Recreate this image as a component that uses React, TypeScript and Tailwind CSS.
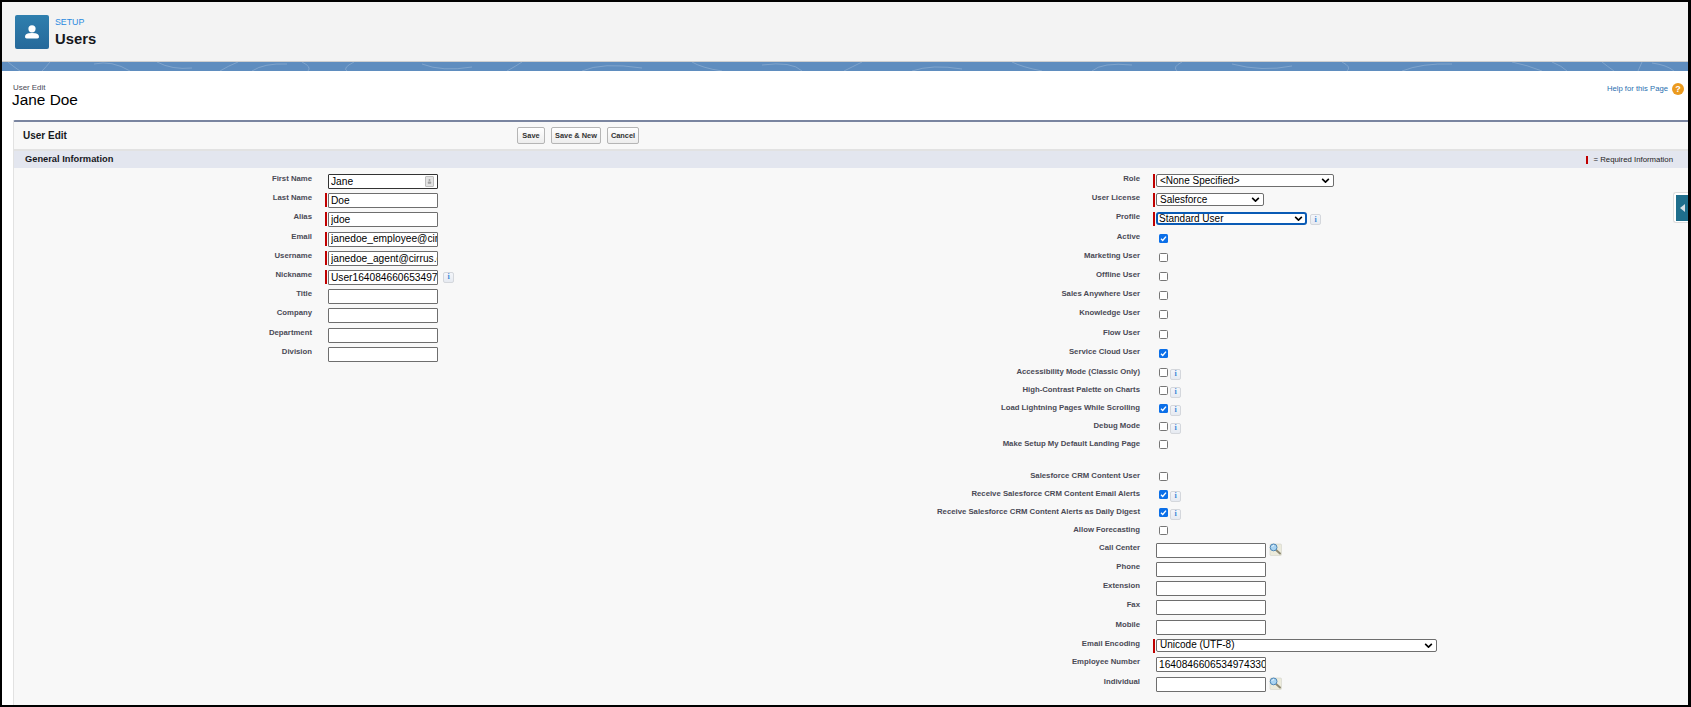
import React from "react";

type Control =
  | { kind: "text"; value?: string; required?: boolean; info?: boolean; lookup?: boolean; contact?: boolean; dark?: boolean }
  | { kind: "select"; value: string; width: string; focused?: boolean; info?: boolean }
  | { kind: "check"; checked?: boolean; info?: boolean };

type Row = { label: string; height?: string; control: Control };

const tall = "h-[19.2px]";
const short = "h-[18px]";

const leftRows: Row[] = [
  { label: "First Name", control: { kind: "text", value: "Jane", contact: true, dark: true } },
  { label: "Last Name", control: { kind: "text", value: "Doe", required: true } },
  { label: "Alias", control: { kind: "text", value: "jdoe", required: true } },
  { label: "Email", control: { kind: "text", value: "janedoe_employee@cirrus.com", required: true } },
  { label: "Username", control: { kind: "text", value: "janedoe_agent@cirrus.com", required: true } },
  { label: "Nickname", control: { kind: "text", value: "User16408466065349743", required: true, info: true } },
  { label: "Title", control: { kind: "text" } },
  { label: "Company", control: { kind: "text" } },
  { label: "Department", control: { kind: "text" } },
  { label: "Division", control: { kind: "text" } },
];

const rightTop: Row[] = [
  { label: "Role", control: { kind: "select", value: "<None Specified>", width: "w-[178px]" } },
  { label: "User License", control: { kind: "select", value: "Salesforce", width: "w-[108px]" } },
  { label: "Profile", control: { kind: "select", value: "Standard User", width: "w-[151px]", focused: true, info: true } },
  { label: "Active", control: { kind: "check", checked: true } },
  { label: "Marketing User", control: { kind: "check" } },
  { label: "Offline User", control: { kind: "check" } },
  { label: "Sales Anywhere User", control: { kind: "check" } },
  { label: "Knowledge User", control: { kind: "check" } },
  { label: "Flow User", control: { kind: "check" } },
  { label: "Service Cloud User", height: "h-[20.2px]", control: { kind: "check", checked: true } },
  { label: "Accessibility Mode (Classic Only)", height: short, control: { kind: "check", info: true } },
  { label: "High-Contrast Palette on Charts", height: short, control: { kind: "check", info: true } },
  { label: "Load Lightning Pages While Scrolling", height: short, control: { kind: "check", checked: true, info: true } },
  { label: "Debug Mode", height: short, control: { kind: "check", info: true } },
  { label: "Make Setup My Default Landing Page", height: short, control: { kind: "check" } },
];

const rightBottom: Row[] = [
  { label: "Salesforce CRM Content User", height: short, control: { kind: "check" } },
  { label: "Receive Salesforce CRM Content Email Alerts", height: short, control: { kind: "check", checked: true, info: true } },
  { label: "Receive Salesforce CRM Content Alerts as Daily Digest", height: short, control: { kind: "check", checked: true, info: true } },
  { label: "Allow Forecasting", height: short, control: { kind: "check" } },
  { label: "Call Center", control: { kind: "text", lookup: true } },
  { label: "Phone", control: { kind: "text" } },
  { label: "Extension", control: { kind: "text" } },
  { label: "Fax", control: { kind: "text" } },
  { label: "Mobile", control: { kind: "text" } },
  { label: "Email Encoding", height: "h-[18.5px]", control: { kind: "select", value: "Unicode (UTF-8)", width: "w-[281px]" } },
  { label: "Employee Number", control: { kind: "text", value: "16408466065349743300" } },
  { label: "Individual", control: { kind: "text", lookup: true } },
];

const wavePaths = [
  "M6 0 Q12 5 18 9", "M48 0 Q44 5 40 9", "M92 2 Q110 -2 128 9", "M155 0 Q170 8 190 6", "M236 0 Q226 4 218 9",
  "M250 9 Q262 1 285 2", "M300 0 Q310 5 306 9", "M352 0 Q340 6 345 9", "M420 2 Q440 10 470 5", "M520 0 Q514 4 505 9",
  "M580 9 Q600 0 640 6", "M690 0 Q700 6 720 9", "M760 3 Q790 -1 800 9", "M860 0 Q850 5 842 9", "M910 9 Q930 2 960 7",
  "M1010 0 Q1020 5 1040 9", "M1090 9 Q1100 0 1130 3", "M1180 0 Q1170 5 1175 9", "M1230 2 Q1260 10 1290 4", "M1340 0 Q1350 5 1345 9",
  "M1400 9 Q1420 1 1450 2", "M1510 0 Q1525 3 1540 9", "M1550 0 Q1560 4 1565 9", "M1600 0 Q1605 4 1612 9", "M1640 0 L1636 9",
  "M1650 1 Q1665 3 1672 9",
];

function InfoButton() {
  return (
    <span className="ml-[2px] flex h-[11px] w-[11px] shrink-0 items-center justify-center rounded-[2px] border border-[#d4d7dc] bg-gradient-to-b from-[#f4f6fa] to-[#e6eaf1] text-[8px] font-bold leading-none text-[#3f86d6] [font-family:'Liberation_Serif',serif]">
      i
    </span>
  );
}

function LookupIcon() {
  return (
    <svg viewBox="0 0 13 13" className="ml-[3px] h-[13px] w-[13px] shrink-0">
      <rect x="1" y="1" width="11.5" height="11.5" rx="1" fill="#ecebdc" stroke="#d4d4ca" strokeWidth="0.6" />
      <path d="M6.5 6.5 L11 10.5" stroke="#8f8a72" strokeWidth="2" strokeLinecap="round" />
      <circle cx="4.6" cy="4.4" r="3.4" fill="#a9d4f2" stroke="#4f86b5" strokeWidth="1" />
      <path d="M2.8 3.8 Q3.6 2.5 5 2.6" stroke="#fff" strokeWidth="0.8" fill="none" />
    </svg>
  );
}

function ContactIcon() {
  return (
    <span className="absolute right-[4px] top-[2px] flex h-[11px] w-[9px] items-center justify-center rounded-[1px] border border-[#bdbdbd] bg-[#e2e2e2]">
      <svg viewBox="0 0 7 9" className="h-[7px] w-[5px]">
        <circle cx="3.5" cy="2.4" r="1.4" fill="#a0a0a0" />
        <rect x="1.2" y="4.6" width="4.6" height="3.2" rx="0.8" fill="#a0a0a0" />
      </svg>
    </span>
  );
}

function RequiredSlot({ on }: { on?: boolean }) {
  return (
    <span className="flex h-[14px] w-[3px] shrink-0">
      {on && <span className="h-full w-[2px] bg-[#c00000]" />}
    </span>
  );
}

function TextBox({ control }: { control: Extract<Control, { kind: "text" }> }) {
  return (
    <div className="flex items-start">
      <RequiredSlot on={control.required} />
      <div className="relative">
        <input
          readOnly
          value={control.value ?? ""}
          className={`block h-[15px] w-[110px] rounded-[1px] border bg-white pl-[2px] text-[10.2px] text-black outline-none ${
            control.dark ? "border-[#333333]" : "border-[#6e6e6e]"
          }`}
        />
        {control.contact && <ContactIcon />}
      </div>
      {control.info && (
        <span className="ml-[3px] mt-[2px]">
          <InfoButton />
        </span>
      )}
      {control.lookup && <LookupIcon />}
    </div>
  );
}

function Dropdown({ control }: { control: Extract<Control, { kind: "select" }> }) {
  return (
    <div className="flex items-start">
      <RequiredSlot on />
      <div className={`relative ${control.width}`}>
        <select
          defaultValue={control.value}
          className={`block h-[13px] w-full appearance-none bg-white text-[10px] leading-none text-black outline-none ${
            control.focused
              ? "rounded-[3px] border-2 border-[#0a5bb5] pl-[1px]"
              : "rounded-[2px] border border-[#6e6e6e] pl-[3px]"
          }`}
        >
          <option>{control.value}</option>
        </select>
        <svg viewBox="0 0 10 6" className="absolute right-[4px] top-[4px] h-[5px] w-[9px]">
          <path d="M1 1 L5 5 L9 1" fill="none" stroke="#000" strokeWidth="1.9" />
        </svg>
      </div>
      {control.info && (
        <span className="ml-[1px] mt-[2px]">
          <InfoButton />
        </span>
      )}
    </div>
  );
}

function CheckBox({ control, compact }: { control: Extract<Control, { kind: "check" }>; compact: boolean }) {
  return (
    <div className={`flex items-start pl-[6px] ${compact ? "pt-[1px]" : "pt-[2px]"}`}>
      {control.checked ? (
        <span className="flex h-[9px] w-[9px] items-center justify-center rounded-[1.5px] bg-[#0b6fe8]">
          <svg viewBox="0 0 9 9" className="h-[9px] w-[9px]">
            <path d="M2 4.8 L3.7 6.4 L7 2.6" fill="none" stroke="#fff" strokeWidth="1.4" />
          </svg>
        </span>
      ) : (
        <span className="h-[9px] w-[9px] rounded-[1.5px] border border-[#767676] bg-white" />
      )}
      {control.info && (
        <span className="mt-[1px]">
          <InfoButton />
        </span>
      )}
    </div>
  );
}

function FormRow({ row, labelWidth }: { row: Row; labelWidth: string }) {
  const { control } = row;
  return (
    <div className={`flex items-start gap-[13px] ${row.height ?? tall}`}>
      <label className={`${labelWidth} shrink-0 text-right text-[7.75px] font-bold leading-[9px] text-[#4a4a56]`}>{row.label}</label>
      {control.kind === "text" && <TextBox control={control} />}
      {control.kind === "select" && <Dropdown control={control} />}
      {control.kind === "check" && <CheckBox control={control} compact={row.height === short} />}
    </div>
  );
}

function ToolButton({ children, width }: { children: React.ReactNode; width: string }) {
  return (
    <button className={`${width} h-[17px] rounded-[2px] border border-[#b5b5b5] bg-gradient-to-b from-white to-[#ededed] text-[7.4px] font-bold text-[#333333]`}>
      {children}
    </button>
  );
}

export default function App() {
  return (
    <div className="relative h-[707px] w-[1691px] overflow-hidden bg-black pb-[2px] pl-[2px] pr-[3px] pt-[2px] [font-family:'Liberation_Sans',Arial,sans-serif]">
      <div className="flex h-full flex-col bg-white">
        {/* setup header */}
        <header className="flex h-[60px] shrink-0 items-start gap-[6px] border-b border-[#cfcfcf] bg-[#f3f3f3] pl-[13px] pt-[13px]">
          <div className="flex h-[34px] w-[34px] items-center justify-center rounded-[2px] bg-gradient-to-b from-[#2f7fae] to-[#26699a]">
            <svg viewBox="0 0 16 16" className="h-[16px] w-[16px]">
              <circle cx="8" cy="4.8" r="3.6" fill="#fff" />
              <path d="M1 13 Q1 9.6 4.6 9.2 Q8 8.6 11.4 9.2 Q15 9.6 15 13 Q15 14.4 13.4 14.4 L2.6 14.4 Q1 14.4 1 13 Z" fill="#fff" />
            </svg>
          </div>
          <div>
            <div className="pt-[2px] text-[8.8px] leading-[11px] text-[#2a8ae0]">SETUP</div>
            <div className="pt-[2px] text-[14.8px] font-bold leading-[18px] text-[#16181d]">Users</div>
          </div>
        </header>

        <div className="h-[9px] shrink-0 bg-[#5f8dbf]">
          <svg viewBox="0 0 1686 9" className="block h-[9px] w-full">
            {wavePaths.map((d) => (
              <path key={d} d={d} fill="none" stroke="#ffffff" strokeOpacity="0.3" strokeWidth="0.7" />
            ))}
          </svg>
        </div>

        {/* page title */}
        <div className="flex h-[49px] shrink-0 items-start justify-between pl-[10px] pr-[4px] pt-[12px]">
          <div>
            <div className="pl-[1px] text-[7.9px] leading-[10px] text-[#4a4a56]">User Edit</div>
            <h1 className="text-[15.4px] leading-[14px] text-black">Jane Doe</h1>
          </div>
          <div className="flex items-center gap-[4px]">
            <a className="text-[7.7px] text-[#2a6fb0]">Help for this Page</a>
            <span className="flex h-[12px] w-[12px] items-center justify-center rounded-full bg-[#eb9a1e] text-[9px] font-bold leading-none text-white">?</span>
          </div>
        </div>

        {/* edit panel */}
        <div className="ml-[11px] flex-1 rounded-tl-[2px] border-l border-t-2 border-l-[#e2e2e2] border-t-[#7a85a0] bg-[#f8f8f8]">
          <div className="flex h-[29px] items-center border-b-2 border-[#e2e2e2] pl-[9px]">
            <h2 className="w-[494px] text-[10px] font-bold text-[#16181d]">User Edit</h2>
            <div className="flex gap-[6px]">
              <ToolButton width="w-[28px]">Save</ToolButton>
              <ToolButton width="w-[50px]">Save &amp; New</ToolButton>
              <ToolButton width="w-[32px]">Cancel</ToolButton>
            </div>
          </div>

          <div className="flex h-[17px] items-center justify-between bg-[#e3e6ef] pl-[11px] pr-[15px]">
            <h3 className="text-[9.3px] font-bold text-[#16181d]">General Information</h3>
            <div className="flex items-center gap-[5px] text-[7.8px] text-[#222222]">
              <span className="h-[8px] w-[2px] bg-[#c00000]" />
              <span>= Required Information</span>
            </div>
          </div>

          <div className="flex pt-[6px]">
            <div className="w-[808px] shrink-0">
              {leftRows.map((row) => (
                <FormRow key={row.label} row={row} labelWidth="w-[298px]" />
              ))}
            </div>
            <div>
              {rightTop.map((row) => (
                <FormRow key={row.label} row={row} labelWidth="w-[318px]" />
              ))}
              <div className="h-[14px]" />
              {rightBottom.map((row) => (
                <FormRow key={row.label} row={row} labelWidth="w-[318px]" />
              ))}
            </div>
          </div>
        </div>
      </div>

      {/* sidebar collapse handle */}
      <div className="absolute right-[3px] top-[192px] flex h-[31px] w-[15px] items-center justify-end rounded-l-[3px] border border-r-0 border-[#dddddd] bg-white">
        <div className="flex h-[26px] w-[12px] items-center justify-center bg-[#1f6e8c]">
          <span className="h-0 w-0 border-y-[4px] border-r-[5px] border-y-transparent border-r-[#d5dfe6]" />
        </div>
      </div>
    </div>
  );
}
